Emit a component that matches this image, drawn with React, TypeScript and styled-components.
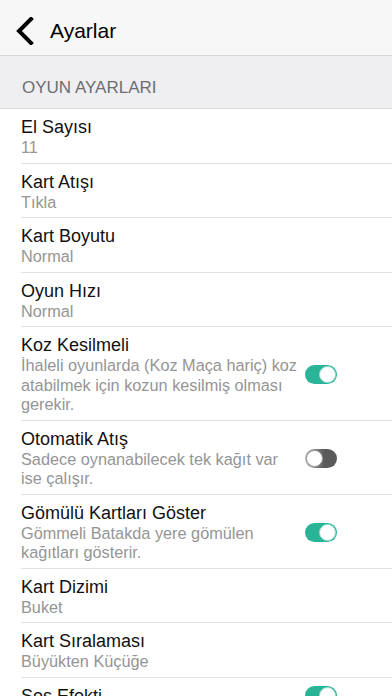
import React from 'react';
import styled, { createGlobalStyle } from 'styled-components';

type Setting = {
  title: string;
  value?: string;
  toggle?: boolean;
};

// line breaks follow the wrapping of the original screen
const settings: Setting[] = [
  { title: 'El Sayısı', value: '11' },
  { title: 'Kart Atışı', value: 'Tıkla' },
  { title: 'Kart Boyutu', value: 'Normal' },
  { title: 'Oyun Hızı', value: 'Normal' },
  {
    title: 'Koz Kesilmeli',
    value: 'İhaleli oyunlarda (Koz Maça hariç) koz\natabilmek için kozun kesilmiş olması\ngerekir.',
    toggle: true,
  },
  {
    title: 'Otomatik Atış',
    value: 'Sadece oynanabilecek tek kağıt var\nise çalışır.',
    toggle: false,
  },
  {
    title: 'Gömülü Kartları Göster',
    value: 'Gömmeli Batakda yere gömülen\nkağıtları gösterir.',
    toggle: true,
  },
  { title: 'Kart Dizimi', value: 'Buket' },
  { title: 'Kart Sıralaması', value: 'Büyükten Küçüğe' },
  { title: 'Ses Efekti', toggle: true },
];

export default function App() {
  return (
    <>
      <GlobalStyle />
      <Page>
        <Header>
          <BackButton aria-label="Geri">
            <svg width="20" height="28" viewBox="0 0 20 28">
              <polyline
                points="16,2 4,14 16,26"
                fill="none"
                stroke="#000"
                strokeWidth="4"
                strokeLinecap="square"
                strokeLinejoin="miter"
              />
            </svg>
          </BackButton>
          <Title>Ayarlar</Title>
        </Header>
        <SectionHeader>OYUN AYARLARI</SectionHeader>
        <List>
          {settings.map((item, index) => (
            <Row key={index}>
              <RowText>
                <RowTitle>{item.title}</RowTitle>
                {item.value && <RowValue>{item.value}</RowValue>}
              </RowText>
              {item.toggle !== undefined && (
                <Switch $on={item.toggle}>
                  <Knob $on={item.toggle} />
                </Switch>
              )}
            </Row>
          ))}
        </List>
      </Page>
    </>
  );
}

const GlobalStyle = createGlobalStyle`
  body {
    margin: 0;
    font-family: "Liberation Sans", Arial, sans-serif;
    background: #fff;
    overflow: hidden;
  }
`;

const Page = styled.div`
  display: flex;
  flex-direction: column;
  width: 392px;
`;

const Header = styled.header`
  display: flex;
  align-items: center;
  height: 56px;
  box-sizing: border-box;
  padding: 6px 0 0 15px;
  background: #f7f7f7;
  border-bottom: 1px solid #d8d8d8;
`;

const BackButton = styled.div`
  display: flex;
  width: 35px;
`;

const Title = styled.h1`
  margin: 0;
  font-size: 21px;
  font-weight: normal;
  color: #000;
`;

const SectionHeader = styled.div`
  padding: 22px 22px 10px;
  font-size: 17px;
  line-height: 20px;
  color: #6d6d72;
  background: #efeff1;
  border-bottom: 1px solid #dcdcdc;
`;

const List = styled.div`
  display: flex;
  flex-direction: column;
  padding-left: 21px;
`;

const Row = styled.div`
  display: flex;
  align-items: center;
  padding: 7px 55px 5px 0;
  border-bottom: 1px solid #e2e2e2;
`;

const RowText = styled.div`
  flex: 1;
  display: flex;
  flex-direction: column;
  padding-right: 4px;
`;

const RowTitle = styled.div`
  font-size: 18px;
  line-height: 22px;
  color: #111;
`;

const RowValue = styled.div`
  font-size: 16.3px;
  line-height: 19.5px;
  color: #959595;
  white-space: pre-line;
`;

const Switch = styled.div<{ $on: boolean }>`
  flex-shrink: 0;
  display: flex;
  align-items: center;
  justify-content: ${(p) => (p.$on ? 'flex-end' : 'flex-start')};
  width: 32px;
  height: 19px;
  box-sizing: border-box;
  padding: 1px;
  border-radius: 10px;
  background: ${(p) =>
    p.$on ? '#29b498' : 'linear-gradient(to right, #b5b5b5, #5a5a5a 60%)'};
`;

const Knob = styled.div<{ $on: boolean }>`
  width: 17px;
  height: 17px;
  box-sizing: border-box;
  border-radius: 50%;
  background: #fff;
  border: 1px solid ${(p) => (p.$on ? '#9adccd' : '#9a9a9a')};
`;
